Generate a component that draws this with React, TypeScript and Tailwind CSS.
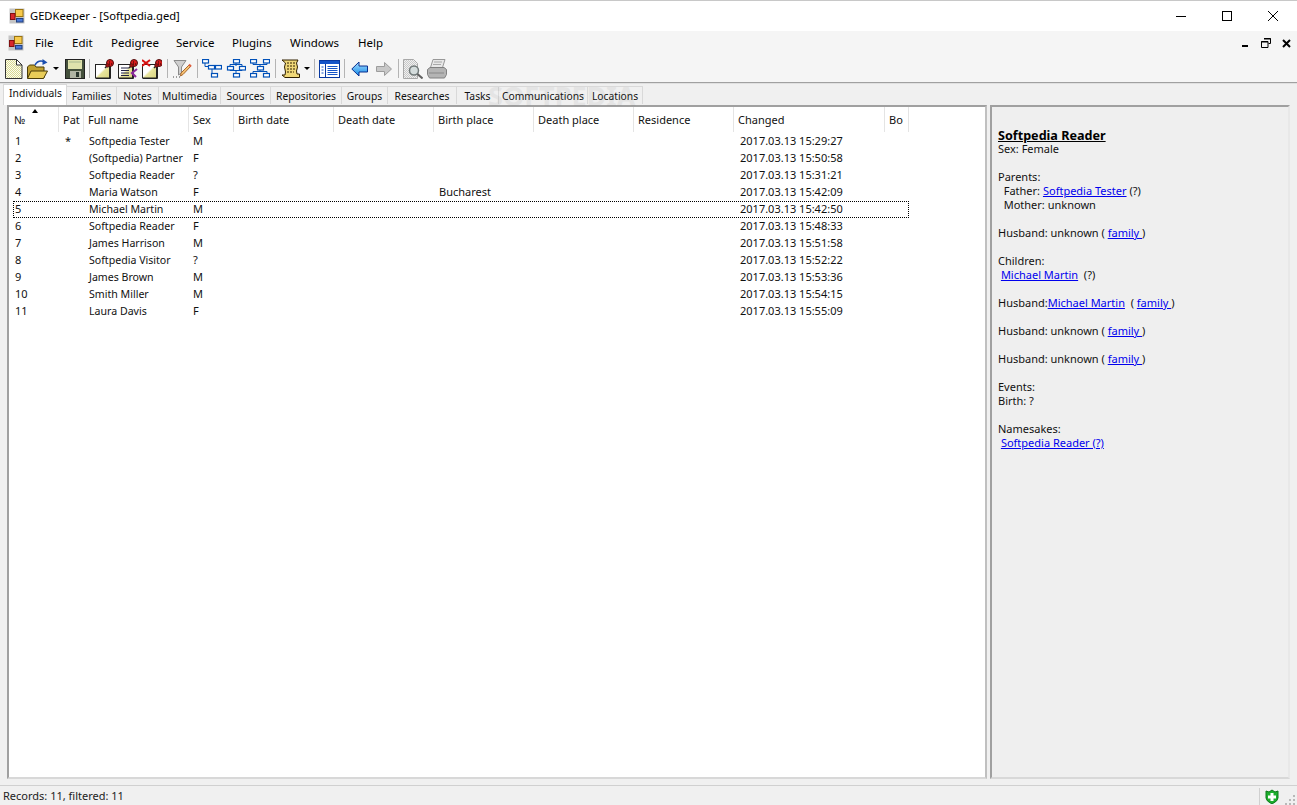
import type { ReactNode } from 'react';

const menus = [
  { name: 'File', w: 'w-[37px]' },
  { name: 'Edit', w: 'w-[39px]' },
  { name: 'Pedigree', w: 'w-[65px]' },
  { name: 'Service', w: 'w-[56px]' },
  { name: 'Plugins', w: 'w-[58px]' },
  { name: 'Windows', w: 'w-[68px]' },
  { name: 'Help', w: 'w-[40px]' },
];

const tabs = [
  { name: 'Individuals', w: 'w-[64px]' },
  { name: 'Families', w: 'w-[50px]' },
  { name: 'Notes', w: 'w-[42px]' },
  { name: 'Multimedia', w: 'w-[62px]' },
  { name: 'Sources', w: 'w-[50px]' },
  { name: 'Repositories', w: 'w-[71px]' },
  { name: 'Groups', w: 'w-[46px]' },
  { name: 'Researches', w: 'w-[69px]' },
  { name: 'Tasks', w: 'w-[42px]' },
  { name: 'Communications', w: 'w-[89px]' },
  { name: 'Locations', w: 'w-[55px]' },
];

const columns = [
  { name: '№', w: 'w-[49px]' },
  { name: 'Pat', w: 'w-[25px]' },
  { name: 'Full name', w: 'w-[105px]' },
  { name: 'Sex', w: 'w-[45px]' },
  { name: 'Birth date', w: 'w-[100px]' },
  { name: 'Death date', w: 'w-[100px]' },
  { name: 'Birth place', w: 'w-[100px]' },
  { name: 'Death place', w: 'w-[100px]' },
  { name: 'Residence', w: 'w-[100px]' },
  { name: 'Changed', w: 'w-[151px]' },
  { name: 'Bo', w: 'w-[24px]' },
];

const rows = [
  { n: 1, pat: '*', name: 'Softpedia Tester', sex: 'M', place: '', changed: '2017.03.13 15:29:27' },
  { n: 2, pat: '', name: '(Softpedia) Partner', sex: 'F', place: '', changed: '2017.03.13 15:50:58' },
  { n: 3, pat: '', name: 'Softpedia Reader', sex: '?', place: '', changed: '2017.03.13 15:31:21' },
  { n: 4, pat: '', name: 'Maria Watson', sex: 'F', place: 'Bucharest', changed: '2017.03.13 15:42:09' },
  { n: 5, pat: '', name: 'Michael Martin', sex: 'M', place: '', changed: '2017.03.13 15:42:50' },
  { n: 6, pat: '', name: 'Softpedia Reader', sex: 'F', place: '', changed: '2017.03.13 15:48:33' },
  { n: 7, pat: '', name: 'James Harrison', sex: 'M', place: '', changed: '2017.03.13 15:51:58' },
  { n: 8, pat: '', name: 'Softpedia Visitor', sex: '?', place: '', changed: '2017.03.13 15:52:22' },
  { n: 9, pat: '', name: 'James Brown', sex: 'M', place: '', changed: '2017.03.13 15:53:36' },
  { n: 10, pat: '', name: 'Smith Miller', sex: 'M', place: '', changed: '2017.03.13 15:54:15' },
  { n: 11, pat: '', name: 'Laura Davis', sex: 'F', place: '', changed: '2017.03.13 15:55:09' },
];

function AppIcon() {
  return (
    <svg width="16" height="16" viewBox="0 0 16 16" className="shrink-0">
      <rect x="0.5" y="0.5" width="15" height="15" fill="#c4c4c4" />
      <rect x="6.500" y="1.500" width="7.500" height="7" fill="#f7ca4c" stroke="#9a7410" />
      <rect x="1.500" y="5.500" width="4.500" height="6" fill="#d8282c" stroke="#801010" />
      <rect x="7.500" y="10.500" width="6.500" height="3.500" fill="#4a78d8" stroke="#204080" />
    </svg>
  );
}

function Defs() {
  return (
    <svg width="0" height="0" className="absolute">
      <defs>
        <pattern id="stipple" width="2" height="2" patternUnits="userSpaceOnUse">
          <rect width="2" height="2" fill="#fdfdf0" />
          <rect width="1" height="1" fill="#d8d890" />
          <rect x="1" y="1" width="1" height="1" fill="#d8d890" />
        </pattern>
        <pattern id="stippleGray" width="2" height="2" patternUnits="userSpaceOnUse">
          <rect width="2" height="2" fill="#f0f0f0" />
          <rect width="1" height="1" fill="#c8c8c8" />
          <rect x="1" y="1" width="1" height="1" fill="#c8c8c8" />
        </pattern>
        <linearGradient id="paper" x1="0" y1="0" x2="1" y2="1">
          <stop offset="0.45" stopColor="#ffffff" />
          <stop offset="0.55" stopColor="#e8e49c" />
          <stop offset="1" stopColor="#d8d480" />
        </linearGradient>
        <linearGradient id="arrowBlue" x1="0" y1="0" x2="0" y2="1">
          <stop offset="0" stopColor="#a8e0ff" />
          <stop offset="1" stopColor="#1088e8" />
        </linearGradient>
      </defs>
    </svg>
  );
}

function Pin({ x = 0 }: { x?: number }) {
  return (
    <g transform={`translate(${x} 0)`}>
      <path d="M10 9l2-2" stroke="#222" strokeWidth="1.5" />
      <circle cx="15" cy="4" r="3.500" fill="#d81c1c" stroke="#501010" />
      <circle cx="12.500" cy="6.500" r="1.800" fill="#a01414" stroke="#401010" strokeWidth="0.600" />
      <path d="M14 3h1M16 5h1M14 5h1" stroke="#200" />
    </g>
  );
}

function Tree({ variant }: { variant: 1 | 2 | 3 }) {
  const layouts = {
    1: {
      boxes: [[0, 0], [6, 6], [13, 6], [9, 14]],
      lines: 'M3 4v3.500h3M12 8h1M10 10v4',
    },
    2: {
      boxes: [[7, 0], [1, 7], [13, 7], [7, 14]],
      lines: 'M10 4v3M4 7V5.500h12V7M10 14v-2.500H4V11M16 11v.5h-6',
    },
    3: {
      boxes: [[0, 0], [13, 0], [7, 7], [0, 14], [13, 14]],
      lines: 'M3 4v1.500h14V4M10 5.500V7M10 11v1.500H3V14M10 12.500h7V14',
    },
  } as const;
  const l = layouts[variant];
  return (
    <svg width="20" height="20" viewBox="0 0 20 20" className="shrink-0">
      <path d={l.lines} fill="none" stroke="#0050b8" />
      {l.boxes.map(([x, y]) => (
        <rect key={`${x}-${y}`} x={x + 0.5} y={y + 0.5} width="6" height="3.500" fill="#fff" stroke="#0050b8" strokeWidth="1.200" />
      ))}
    </svg>
  );
}

function Sep({ className }: { className: string }) {
  return <div className={`w-px h-[19px] bg-[#b4b4b4] shrink-0 ${className}`} />;
}

function Caret({ className }: { className: string }) {
  return <div className={`w-0 h-0 border-x-[3px] border-x-transparent border-t-[3px] border-t-black shrink-0 ${className}`} />;
}

function DocFrame({ className, children }: { className: string; children?: ReactNode }) {
  return (
    <svg width="20" height="20" viewBox="0 0 20 20" className={`shrink-0 ${className}`}>
      <rect x="0.500" y="5.500" width="14" height="13.500" fill="url(#paper)" stroke="#222" />
      <path d="M1 19.500h14.500V7" fill="none" stroke="#222" />
      {children}
    </svg>
  );
}

function Toolbar() {
  return (
    <div className="h-[27px] flex items-center bg-[#f5f5f5] pl-[5px]">
      <svg width="18" height="20" viewBox="0 0 18 20" className="shrink-0">
        <path d="M.5.5h11l5.500 5.500v13.500H.5z" fill="url(#stipple)" stroke="#333" />
        <path d="M11.500.5v5.500h5.500z" fill="#fff" stroke="#333" />
      </svg>
      <svg width="21" height="20" viewBox="0 0 21 20" className="ml-[4px] shrink-0">
        <path d="M.5 8l2-2h5l1.500 2h8v11H.5z" fill="#c0a030" stroke="#4a3c08" />
        <path d="M4 12h16.500l-4 7.500H.5z" fill="#e8cc58" stroke="#4a3c08" />
        <path d="M8 6q3-5.500 9-3.500" fill="none" stroke="#1c4fb0" strokeWidth="1.600" />
        <path d="M15.500 0l5 3.500-5 2.500z" fill="#1c4fb0" />
      </svg>
      <Caret className="ml-[5px]" />
      <svg width="20" height="20" viewBox="0 0 20 20" className="ml-[6px] shrink-0">
        <rect x="0.500" y="0.500" width="19" height="19" fill="#44503c" stroke="#222" />
        <rect x="3" y="1" width="14" height="9" fill="#dfe2ac" />
        <path d="M4 3h12" stroke="#a8b890" />
        <rect x="5" y="12" width="11" height="7" fill="#b0b4a4" />
        <rect x="11" y="13" width="3" height="5" fill="#2c3830" />
      </svg>
      <Sep className="ml-[4px]" />
      <DocFrame className="ml-[5px]"><Pin /></DocFrame>
      <DocFrame className="ml-[3px]">
        <path d="M3 9h8M3 11.500h8M3 14h8M3 16.500h8" stroke="#224" />
        <Pin x={1} />
        <path d="M19 10l-5 4 4 4" fill="none" stroke="#8c2a9c" strokeWidth="2.200" />
      </DocFrame>
      <DocFrame className="ml-[4px]">
        <Pin x={2} />
        <path d="M0 1l8 6M8 1L0 7" stroke="#d81010" strokeWidth="2" />
      </DocFrame>
      <Sep className="ml-[5px]" />
      <svg width="20" height="20" viewBox="0 0 20 20" className="ml-[5px] shrink-0">
        <path d="M1 1.500h12L8.500 8v6l-3 2V8z" fill="#cfcfcf" stroke="#8a8a8a" />
        <path d="M18 7l-8 8.500-2.500 1.500.5-3 8-8z" fill="#f4c070" stroke="#a86830" />
        <path d="M16 5.500l2 2" stroke="#e06040" strokeWidth="2" />
        <path d="M0 18h1M3 18h1M6 18h1" stroke="#444" />
      </svg>
      <Sep className="ml-[4px]" />
      <div className="ml-[4px] flex gap-[4px]">
        <Tree variant={1} />
        <Tree variant={2} />
        <Tree variant={3} />
      </div>
      <Sep className="ml-[5px]" />
      <svg width="20" height="20" viewBox="0 0 20 20" className="ml-[5px] shrink-0">
        <path d="M1 1h16l-1.500 3 1 4-1 4 .5 3h2.500v3.500H4L1 16h3l.5-3-1-5 1-4z" fill="#f0d878" stroke="#302000" />
        <path d="M6 4h8M6 7h8M6 10h8M6 13h7" stroke="#302000" strokeDasharray="2 1" />
      </svg>
      <Caret className="ml-[3px]" />
      <Sep className="ml-[4px]" />
      <svg width="21" height="20" viewBox="0 0 21 20" className="ml-[4px] shrink-0">
        <rect x="0.500" y="1.500" width="20" height="17" fill="#fff" stroke="#0838a0" />
        <rect x="1" y="2" width="19" height="3" fill="#1454c8" />
        <path d="M6.500 5v13" stroke="#0838a0" />
        <path d="M2.500 8h2M2.500 11h2M2.500 14h2M8.500 7.500h10M8.500 9.500h10M8.500 11.500h10M8.500 13.500h10M8.500 15.500h10" stroke="#1454c8" />
      </svg>
      <Sep className="ml-[4px]" />
      <svg width="17" height="16" viewBox="0 0 17 16" className="ml-[6px] shrink-0">
        <path d="M.8 8l7.200-7v4h8.500v6H8v4z" fill="url(#arrowBlue)" stroke="#0a3090" />
      </svg>
      <svg width="16" height="16" viewBox="0 0 16 16" className="ml-[8px] shrink-0">
        <path d="M15.500 8L8.500 1.500v4H.5v5h8v4z" fill="#c8c8c8" stroke="#9c9c9c" />
      </svg>
      <Sep className="ml-[6px]" />
      <svg width="20" height="20" viewBox="0 0 20 20" className="ml-[4px] shrink-0">
        <path d="M.5.5h10l4 4v15H.5z" fill="url(#stippleGray)" stroke="#a8a8a8" />
        <circle cx="11" cy="11.500" r="4.500" fill="#d4dcdc" stroke="#707878" strokeWidth="1.500" />
        <path d="M14.500 15l5 4.500" stroke="#606060" strokeWidth="2" />
      </svg>
      <svg width="20" height="20" viewBox="0 0 20 20" className="ml-[4px] shrink-0">
        <path d="M6 .5h12l-2.500 8H3.500z" fill="#e8e8e8" stroke="#989898" />
        <path d="M7 3h8M6 5.500h8" stroke="#a8a8a8" />
        <path d="M3 8.500h14l2.500 2v5l-2 3.500H2.500L.5 15.500v-5z" fill="#b4b4b4" stroke="#808080" />
        <path d="M2 14h15" stroke="#888" />
      </svg>
    </div>
  );
}

function Row({ row }: { row: (typeof rows)[number] }) {
  const focused = row.n === 5;
  return (
    <div className={`h-[17px] w-[896px] ml-[3px] flex items-center whitespace-nowrap ${focused ? 'outline-1 outline-dotted outline-black -outline-offset-1' : ''}`}>
      <div className="w-[46px] pl-[2px]">{row.n}</div>
      <div className="w-[25px] pl-[6px]">{row.pat}</div>
      <div className="w-[105px] pl-[5px] text-[10.6px]">{row.name}</div>
      <div className="w-[45px] pl-[4px]">{row.sex}</div>
      <div className="w-[200px]" />
      <div className="w-[100px] pl-[5px]">{row.place}</div>
      <div className="w-[200px]" />
      <div className="w-[151px] pl-[6px]">{row.changed}</div>
    </div>
  );
}

function Link({ children }: { children: ReactNode }) {
  return <span className="text-[#0000ee] underline">{children}</span>;
}

function Line({ children }: { children?: ReactNode }) {
  return <div className="h-[14px] leading-[14px] whitespace-pre">{children}</div>;
}

export default function App() {
  return (
    <div className="w-[1297px] h-[805px] flex flex-col bg-[#f0f0f0] overflow-hidden text-[11px] text-[#111] font-['Noto_Sans','DejaVu_Sans',sans-serif] relative">
      <Defs />
      <div className="h-[31px] bg-white flex items-center pl-[9px] shrink-0 border-t border-[#c8c8c8]">
        <AppIcon />
        <span className="ml-[5px] text-[11.2px] text-black">GEDKeeper - [Softpedia.ged]</span>
        <div className="ml-auto flex items-center pr-px">
          <div className="w-[46px] flex justify-center"><div className="w-[10px] h-px bg-black" /></div>
          <div className="w-[46px] flex justify-center"><div className="w-[10px] h-[10px] border border-black" /></div>
          <div className="w-[46px] flex justify-center">
            <svg width="10" height="10" viewBox="0 0 10 10"><path d="M0 0l10 10M10 0L0 10" stroke="#000" /></svg>
          </div>
        </div>
      </div>

      <div className="h-[24px] bg-[#f5f5f5] flex items-center pl-[8px] shrink-0">
        <AppIcon />
        <div className="flex text-[11.5px] text-black ml-[11px]">
          {menus.map((m) => (
            <span key={m.name} className={m.w}>{m.name}</span>
          ))}
        </div>
        <div className="ml-auto flex items-center pr-[6px]">
          <div className="w-[6px] h-[2px] bg-black mt-[6px]" />
          <svg width="10" height="10" viewBox="0 0 10 10" className="ml-[13px]">
            <path d="M3 .5h6.500v5H7.500M.5 3.500h6.500v6H.5z" fill="none" stroke="#000" />
            <path d="M3 1h7M0 4h7" stroke="#000" />
          </svg>
          <svg width="9" height="9" viewBox="0 0 9 9" className="ml-[11px]"><path d="M1 1l7 7M8 1L1 8" stroke="#000" strokeWidth="2" /></svg>
        </div>
      </div>

      <div className="shrink-0"><Toolbar /></div>

      <div className="h-[2px] bg-[#a0a0a0] border-b border-[#e0e0e0] shrink-0" />

      <div className="flex-1 flex flex-col min-h-0 relative">
        <div className="h-[21px] flex items-end pl-[3px] shrink-0 relative z-10 text-[10.3px]">
          {tabs.map((t, i) => (
            <div
              key={t.name}
              className={`${t.w} flex items-center justify-center border-r border-[#d9d9d9] whitespace-nowrap ${
                i === 0
                  ? 'h-[21px] bg-white border-l border-t border-[#d9d9d9] pb-[2px] pl-px'
                  : 'h-[18px] border-t border-[#d9d9d9] mb-[1px] pt-[2px]'
              }`}
            >
              {t.name}
            </div>
          ))}
        </div>

        <div className="flex-1 flex min-h-0 pl-[7px] pr-[7px] pb-[6px]">
          <div className="w-[980px] bg-white border-2 border-[#a0a0a0] border-r-[#c0c0c0] border-b-[#d8d8d8] pl-px overflow-hidden">
            <div className="h-[26px] flex relative">
              {columns.map((c) => (
                <div key={c.name} className={`${c.w} h-[25px] pt-px flex items-center pl-[4px] border-r border-[#e4e4e4] shrink-0`}>
                  {c.name}
                </div>
              ))}
              <div className="absolute left-[22px] top-[2px] w-0 h-0 border-x-[3px] border-x-transparent border-b-[4px] border-b-black" />
            </div>
            {rows.map((r) => (
              <Row key={r.n} row={r} />
            ))}
          </div>

          <div className="w-[300px] ml-[3px] border-2 border-[#a0a0a0] border-r-[#e8e8e8] border-b-[#d8d8d8] bg-[#efefef] pl-[6px] pt-[21px]">
            <div className="h-[14px] leading-[15px] text-[12.6px] font-bold underline text-black">Softpedia Reader</div>
            <Line>Sex: Female</Line>
            <Line />
            <Line>Parents:</Line>
            <Line>{'  Father: '}<Link>Softpedia Tester</Link>{' (?)'}</Line>
            <Line>{'  Mother: unknown'}</Line>
            <Line />
            <Line>Husband: unknown ( <Link>family </Link>)</Line>
            <Line />
            <Line>Children:</Line>
            <Line> <Link>Michael Martin</Link>{'  (?)'}</Line>
            <Line />
            <Line>Husband:<Link>Michael Martin</Link>{'  ( '}<Link>family </Link>)</Line>
            <Line />
            <Line>Husband: unknown ( <Link>family </Link>)</Line>
            <Line />
            <Line>Husband: unknown ( <Link>family </Link>)</Line>
            <Line />
            <Line>Events:</Line>
            <Line>Birth: ?</Line>
            <Line />
            <Line>Namesakes:</Line>
            <Line> <Link>Softpedia Reader (?)</Link></Line>
          </div>
        </div>

        <div className="absolute left-[488px] top-[-5px] text-[27px] leading-[34px] font-bold text-[#808080] opacity-[0.1] pointer-events-none z-20">
          SOFTPEDIA
        </div>
      </div>

      <div className="h-[20px] shrink-0 border-t border-[#d0d0d0] flex items-center pl-[3px] pt-[2px] text-[#222]">
        Records: 11, filtered: 11
        <div className="ml-auto h-full flex items-center">
          <div className="w-px h-[17px] bg-[#d0d0d0] mr-[5px]" />
          <svg width="14" height="15" viewBox="0 0 14 15">
            <path d="M1 2l3 1 3-2 3 2 3-1v7q0 3-6 6-6-3-6-6z" fill="#1cae2c" stroke="#0c7a1a" />
            <path d="M5.500 4h3v2.500H11v3H8.500V12h-3V9.500H3v-3h2.500z" fill="#fff" />
          </svg>
          <svg width="11" height="11" viewBox="0 0 11 11" className="ml-[6px] mt-[5px] mr-[1px]">
            <path d="M8 1h2v2H8zM4 5h2v2H4zM8 5h2v2H8zM0 9h2v2H0zM4 9h2v2H4zM8 9h2v2H8z" fill="#b8b8b8" />
          </svg>
        </div>
      </div>
    </div>
  );
}
